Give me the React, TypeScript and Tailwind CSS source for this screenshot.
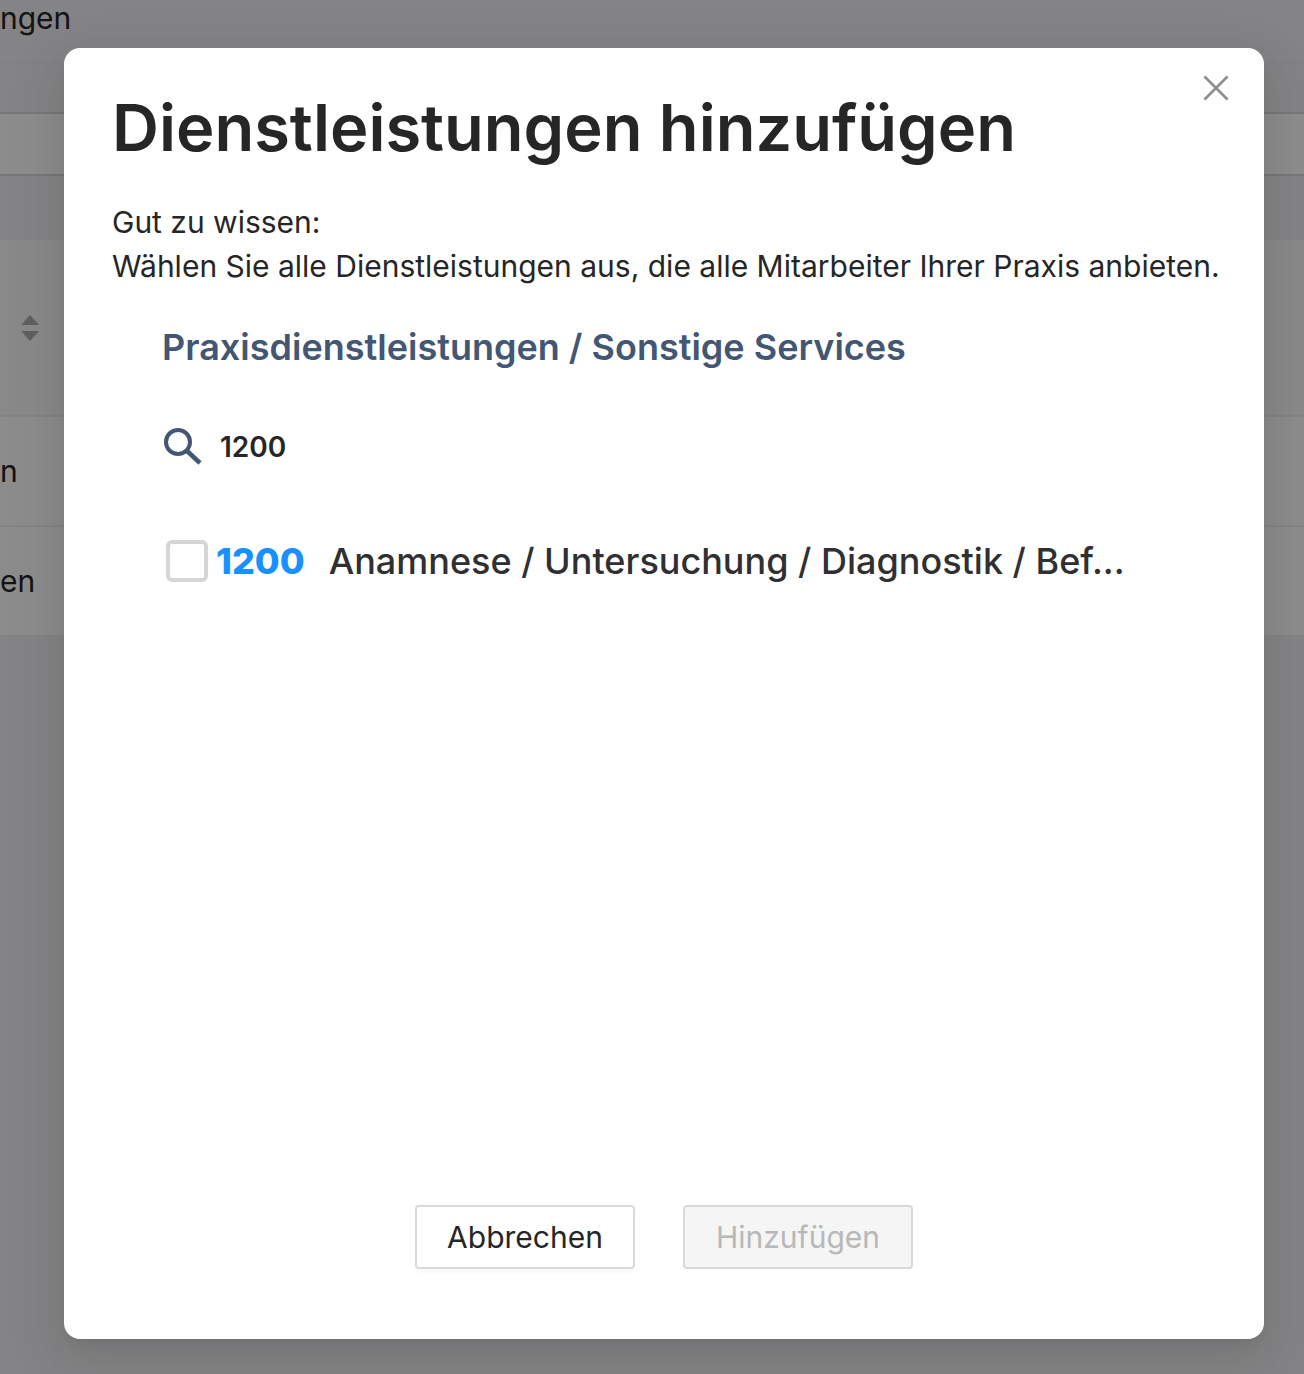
import React, { useState } from "react";

const services = [
  {
    code: "1200",
    name: "Anamnese / Untersuchung / Diagnostik / Bef...",
  },
];

const rows = ["n", "en"];

const ServicesPage: React.FC = () => {
  return (
    <div className="min-h-screen bg-[#f0f0f4] text-[30px] text-[#262626]">
      <header className="h-16 border-b-2 border-[#ededf0]">
        <p className="leading-9">ngen</p>
      </header>
      <div className="mt-12 h-16 border-y-2 border-[#d9d9d9] bg-white" />
      <table className="mt-16 w-full border-collapse bg-white leading-11">
        <thead>
          <tr className="h-44 border-b-2 border-[#f0f0f0] bg-[#fafafa]">
            <th className="pl-5 text-left">
              <button type="button" aria-label="Sortieren" className="block">
                <svg width="20" height="28" viewBox="0 0 20 28" fill="#b0b0b0">
                  <path d="M10 1 19 11H1Z" />
                  <path d="M10 27 1 17H19Z" />
                </svg>
              </button>
            </th>
          </tr>
        </thead>
        <tbody>
          {rows.map((row) => (
            <tr key={row} className="h-[110px] border-b-2 border-[#f0f0f0]">
              <td>{row}</td>
            </tr>
          ))}
        </tbody>
      </table>
    </div>
  );
};

const AddServicesDialog: React.FC = () => {
  const [search, setSearch] = useState("1200");
  const [selected, setSelected] = useState<string[]>([]);

  const toggle = (code: string) => {
    setSelected((prev) =>
      prev.includes(code) ? prev.filter((c) => c !== code) : [...prev, code]
    );
  };

  const visible = services.filter((service) => service.code.includes(search));

  return (
    <div
      role="dialog"
      aria-labelledby="dialog-title"
      className="relative flex w-full flex-col rounded-2xl bg-white px-12 pt-12 pb-[70px] text-[#262626] shadow-[0_6px_12px_-8px_rgba(0,0,0,0.12),0_12px_32px_0_rgba(0,0,0,0.08),0_18px_56px_16px_rgba(0,0,0,0.05)]"
    >
      <button
        type="button"
        aria-label="Schließen"
        className="absolute top-6 right-8 flex h-8 w-8 items-center justify-center"
      >
        <svg width="28" height="28" viewBox="0 0 28 28" fill="none" stroke="#8c8c8c" strokeWidth="2.5">
          <path d="M2.5 2.5 25.5 25.5M25.5 2.5 2.5 25.5" />
        </svg>
      </button>

      <h1 id="dialog-title" className="text-[65px] leading-16 font-semibold">
        Dienstleistungen hinzufügen
      </h1>
      <p className="mt-10 -mr-6 text-[30px] leading-11">
        Gut zu wissen:
        <br />
        Wählen Sie alle Dienstleistungen aus, die alle Mitarbeiter Ihrer Praxis
        anbieten.
      </p>

      <div className="flex-1 px-[50px] pt-[37px]">
        <h2 className="text-4xl leading-11 font-semibold text-[#435672]">
          Praxisdienstleistungen / Sonstige Services
        </h2>

        {/* Search */}
        <label className="mt-14 flex h-11 items-center gap-4">
          <svg width="42" height="42" viewBox="0 0 42 42" fill="none" stroke="#435672" strokeWidth="4">
            <circle cx="16" cy="16" r="12" />
            <path d="M24 24 38 37" strokeWidth="4.5" />
          </svg>
          <input
            type="text"
            aria-label="Suche"
            value={search}
            onChange={(e) => setSearch(e.target.value)}
            className="min-w-0 flex-1 text-[28px] font-semibold outline-none"
          />
        </label>

        {/* Service list */}
        <ul className="mt-17 pl-1">
          {visible.map((service) => (
            <li key={service.code}>
              <label className="flex items-center text-4xl leading-12">
                <input
                  type="checkbox"
                  checked={selected.includes(service.code)}
                  onChange={() => toggle(service.code)}
                  className="h-[42px] w-[42px] shrink-0 appearance-none rounded-md border-4 border-[#d6d6d6] bg-white checked:bg-[#1890ff]"
                />
                <span className="ml-2 font-extrabold text-[#1890ff]">
                  {service.code}
                </span>
                <span className="ml-6 truncate font-medium text-[#303033]">
                  {service.name}
                </span>
              </label>
            </li>
          ))}
        </ul>
      </div>

      <div className="mt-[620px] flex justify-center gap-12 text-[30px]">
        <button
          type="button"
          className="h-16 w-[220px] rounded-sm border-2 border-[#d9d9d9] bg-white shadow-[0_4px_0_rgba(0,0,0,0.016)]"
        >
          Abbrechen
        </button>
        <button
          type="button"
          disabled={selected.length === 0}
          className="h-16 w-[230px] rounded-sm border-2 border-[#d9d9d9] bg-[#f5f5f5] disabled:text-[#b8b8b8]"
        >
          Hinzufügen
        </button>
      </div>
    </div>
  );
};

const App: React.FC = () => {
  return (
    <div className="relative font-[Inter,sans-serif]">
      <ServicesPage />
      <div className="absolute inset-0 overflow-hidden bg-black/45 pt-12 pr-10 pl-16">
        <AddServicesDialog />
      </div>
    </div>
  );
};

export default App;
